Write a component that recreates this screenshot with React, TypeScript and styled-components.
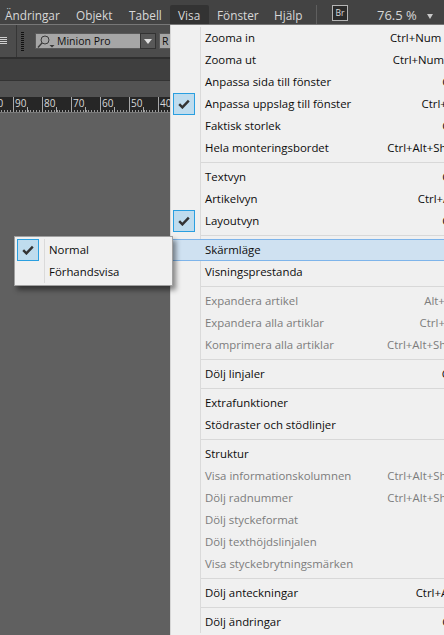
import React from "react";
import styled, { createGlobalStyle } from "styled-components";

const Global = createGlobalStyle`
  html, body { margin: 0; padding: 0; background: #606060; }
  #root { width: 444px; height: 635px; overflow: hidden; }
`;

const UI = `"Open Sans", "Noto Sans", "Liberation Sans", sans-serif`;

const Page = styled.div`
  position: relative;
  width: 444px;
  height: 635px;
  overflow: hidden;
  background: #606060;
  font-family: ${UI};
  display: flex;
  flex-direction: column;
`;
const MenuBar = styled.div`
  height: 19px;
  flex: none;
  background: #434343;
  border-bottom: 1px solid #777;
  display: flex;
  align-items: center;
  color: #d8d8d8;
  font-size: 11.8px;
  padding: 5px 0 0 5px;
`;
const MenuTitle = styled.div<{ $w: number; $pad?: number; $open?: boolean }>`
  width: ${(p) => p.$w}px;
  flex: none;
  height: 19px;
  display: flex;
  align-items: center;
  box-sizing: border-box;
  padding-left: ${(p) => p.$pad ?? 0}px;
  background: ${(p) => (p.$open ? "#333333" : "transparent")};
  border-radius: ${(p) => (p.$open ? "2px 2px 0 0" : "0")};
`;
const Divider = styled.div`
  width: 1px;
  height: 19px;
  background: #5f5f5f;
  margin: 0 15px 0 0;
`;
const Bridge = styled.div`
  width: 16px;
  height: 16px;
  align-self: flex-start;
  box-sizing: border-box;
  border: 1px solid #b5b5b5;
  background: #2b2b2b;
  color: #ddd;
  font-size: 8.5px;
  text-align: center;
  line-height: 14px;
`;
const Zoom = styled.div`
  margin-left: 29px;
  font-size: 13px;
  color: #d8d8d8;
  white-space: nowrap;
`;
const Caret = styled.span`
  display: inline-block;
  margin-left: 10px;
  width: 0;
  height: 0;
  border-left: 3.5px solid transparent;
  border-right: 3.5px solid transparent;
  border-top: 5px solid #c8c8c8;
  vertical-align: 1px;
`;
const ToolBar = styled.div`
  height: 34px;
  flex: none;
  box-sizing: border-box;
  background: #4c4c4c;
  border-bottom: 2px solid #2f2f2f;
  display: flex;
  align-items: center;
`;
const Hamburger = styled.div`
  width: 7px;
  height: 8px;
  margin-right: 9px;
  background: repeating-linear-gradient(to bottom, #d0d0d0 0 1px, transparent 1px 2px);
`;
const Sep = styled.div`
  width: 1px;
  height: 32px;
  background: #363636;
  margin-right: 4px;
`;
const Gripper = styled.div`
  width: 3px;
  height: 19px;
  margin-right: 12px;
  background: repeating-linear-gradient(to bottom, #111 0 1px, #4c4c4c 1px 2px);
`;
const FontField = styled.div`
  width: 105px;
  height: 14px;
  flex: none;
  box-sizing: border-box;
  background: #a6a6a6;
  outline: 1px solid #5a5a5a;
  display: flex;
  align-items: center;
  font-size: 10.5px;
  color: #101010;
  gap: 2px;
`;
const DropBtn = styled.div`
  width: 14px;
  height: 14px;
  flex: none;
  background: #585858;
  outline: 1px solid #333;
  display: flex;
  align-items: center;
  justify-content: center;
  margin-right: 5px;
`;
const DropTri = styled.div`
  width: 0;
  height: 0;
  border-left: 4px solid transparent;
  border-right: 4px solid transparent;
  border-top: 5px solid #e0e0e0;
`;
const SizeField = styled(FontField)`
  width: 30px;
  padding-left: 2px;
`;
const TabBar = styled.div`
  height: 21px;
  flex: none;
  background: #3f3f3f;
  border-bottom: 1px solid #333;
`;
const Strip = styled.div`
  height: 16px;
  flex: none;
  background: #535353;
`;
const Ruler = styled.div`
  height: 15px;
  flex: none;
  background: #262626;
  display: flex;
  padding-left: 13px;
  margin-left: -29px;
  border-bottom: 1px solid #7a7a7a;
`;
const RulerCell = styled.div`
  width: 29px;
  flex: none;
  box-sizing: border-box;
  border-left: 1px solid #a8a8a8;
  color: #d8d8d8;
  font-size: 10px;
  line-height: 12px;
  padding-left: 1px;
  white-space: nowrap;
  background:
    linear-gradient(#aaa, #aaa) 13px bottom / 1px 5px no-repeat,
    repeating-linear-gradient(to right, transparent 0 1.9px, #999 1.9px 2.9px) left bottom / 100% 2px no-repeat;
`;
const Canvas = styled.div`
  flex: 1;
  background: #606060;
`;
const Menu = styled.div`
  position: absolute;
  left: 170px;
  top: 25px;
  width: 305px;
  height: 620px;
  background: #f0f0f0;
  border-left: 1px solid #d6d6d6;
  box-sizing: border-box;
  display: flex;
  flex-direction: column;
  padding-top: 2px;
  font-size: 11.4px;
  &::before {
    content: "";
    position: absolute;
    left: 29px;
    top: 2px;
    bottom: 12px;
    width: 1px;
    background: #dadada;
  }
`;
const Row = styled.div<{ $hl?: boolean; $off?: boolean }>`
  position: relative;
  height: 22px;
  flex: none;
  box-sizing: border-box;
  display: flex;
  align-items: center;
  justify-content: space-between;
  white-space: nowrap;
  padding: 0 1px 2px 34px;
  color: ${(p) => (p.$off ? "#7c7c7c" : "#0c0c0c")};
  background: ${(p) => (p.$hl ? "#cfe1f1" : "transparent")};
  border: 1px solid ${(p) => (p.$hl ? "#7eb4ea" : "transparent")};
  border-left-width: 0;
  border-right-width: 0;
`;
const Rule = styled.div`
  height: 1px;
  flex: none;
  background: #d8d8d8;
  margin: 3px 0 3px 30px;
`;
const CheckBox = styled.div`
  position: absolute;
  left: 2px;
  top: -1px;
  width: 22px;
  height: 22px;
  box-sizing: border-box;
  background: #bfdcee;
  border: 1px solid #2a9fe0;
  display: flex;
  align-items: center;
  justify-content: center;
`;
const Sub = styled.div`
  position: absolute;
  left: 14px;
  top: 236px;
  width: 159px;
  height: 50px;
  box-sizing: border-box;
  background: #f0f0f0;
  border: 1px solid #a0a0a0;
  box-shadow: 3px 4px 5px rgba(0, 0, 0, 0.45);
  padding: 2px 0;
  font-size: 11.4px;
  &::before {
    content: "";
    position: absolute;
    left: 29px;
    top: 2px;
    bottom: 2px;
    width: 1px;
    background: #dadada;
  }
`;

const Check = () => (
  <svg width="12" height="10" viewBox="0 0 12 10">
    <path d="M1.2 5.2 L4.4 8.4 L10.8 1.6" fill="none" stroke="#333" strokeWidth="2.4" />
  </svg>
);

type It = { t: string; s?: string; c?: boolean; off?: boolean; hl?: boolean } | "-";
const items: It[] = [
  { t: "Zooma in", s: "Ctrl+Num pad +" },
  { t: "Zooma ut", s: "Ctrl+Num pad -" },
  { t: "Anpassa sida till fönster", s: "Ctrl+0" },
  { t: "Anpassa uppslag till fönster", s: "Ctrl+Alt+0", c: true },
  { t: "Faktisk storlek", s: "Ctrl+1" },
  { t: "Hela monteringsbordet", s: "Ctrl+Alt+Shift+M" },
  "-",
  { t: "Textvyn", s: "Ctrl+Y" },
  { t: "Artikelvyn", s: "Ctrl+Alt+M" },
  { t: "Layoutvyn", s: "Ctrl+Y", c: true },
  "-",
  { t: "Skärmläge", hl: true },
  { t: "Visningsprestanda" },
  "-",
  { t: "Expandera artikel", s: "Alt+Num.", off: true },
  { t: "Expandera alla artiklar", s: "Ctrl+Num.", off: true },
  { t: "Komprimera alla artiklar", s: "Ctrl+Alt+Shift+W", off: true },
  "-",
  { t: "Dölj linjaler", s: "Ctrl+R" },
  "-",
  { t: "Extrafunktioner" },
  { t: "Stödraster och stödlinjer" },
  "-",
  { t: "Struktur" },
  { t: "Visa informationskolumnen", s: "Ctrl+Alt+Shift+M", off: true },
  { t: "Dölj radnummer", s: "Ctrl+Alt+Shift+M", off: true },
  { t: "Dölj styckeformat", off: true },
  { t: "Dölj texthöjdslinjalen", off: true },
  { t: "Visa styckebrytningsmärken", off: true },
  "-",
  { t: "Dölj anteckningar", s: "Ctrl+Alt+F1" },
  "-",
  { t: "Dölj ändringar", s: "Ctrl+8" },
];

export default function App() {
  return (
    <Page>
      <Global />
      <MenuBar>
        <MenuTitle $w={71}>Ändringar</MenuTitle>
        <MenuTitle $w={53}>Objekt</MenuTitle>
        <MenuTitle $w={41}>Tabell</MenuTitle>
        <MenuTitle $w={39} $pad={8} $open>Visa</MenuTitle>
        <MenuTitle $w={65} $pad={8}>Fönster</MenuTitle>
        <MenuTitle $w={42}>Hjälp</MenuTitle>
        <Divider />
        <Bridge>Br</Bridge>
        <Zoom>76.5 %<Caret /></Zoom>
      </MenuBar>
      <ToolBar>
        <Hamburger />
        <Sep />
        <Gripper />
        <FontField>
          <svg width="19" height="13" viewBox="0 0 19 13">
            <circle cx="9" cy="5" r="4" fill="none" stroke="#3a3a3a" strokeWidth="1" />
            <path d="M6 8 L2 12.5" stroke="#3a3a3a" strokeWidth="1.3" />
            <path d="M13.5 10 h5 l-2.5 2.5 z" fill="#3a3a3a" />
          </svg>
          Minion Pro
        </FontField>
        <DropBtn><DropTri /></DropBtn>
        <SizeField>R</SizeField>
      </ToolBar>
      <TabBar />
      <Strip />
      <Ruler>
        {["100", "90", "80", "70", "60", "50", "40"].map((n) => (
          <RulerCell key={n}>{n}</RulerCell>
        ))}
      </Ruler>
      <Canvas />
      <Menu>
        {items.map((it, i) =>
          it === "-" ? (
            <Rule key={i} />
          ) : (
            <Row key={i} $hl={it.hl} $off={it.off}>
              {it.c && <CheckBox><Check /></CheckBox>}
              <span>{it.t}</span>
              {it.s && <span>{it.s}</span>}
            </Row>
          )
        )}
      </Menu>
      <Sub>
        <Row>
          <CheckBox><Check /></CheckBox>
          <span>Normal</span>
        </Row>
        <Row>
          <span>Förhandsvisa</span>
        </Row>
      </Sub>
    </Page>
  );
}
